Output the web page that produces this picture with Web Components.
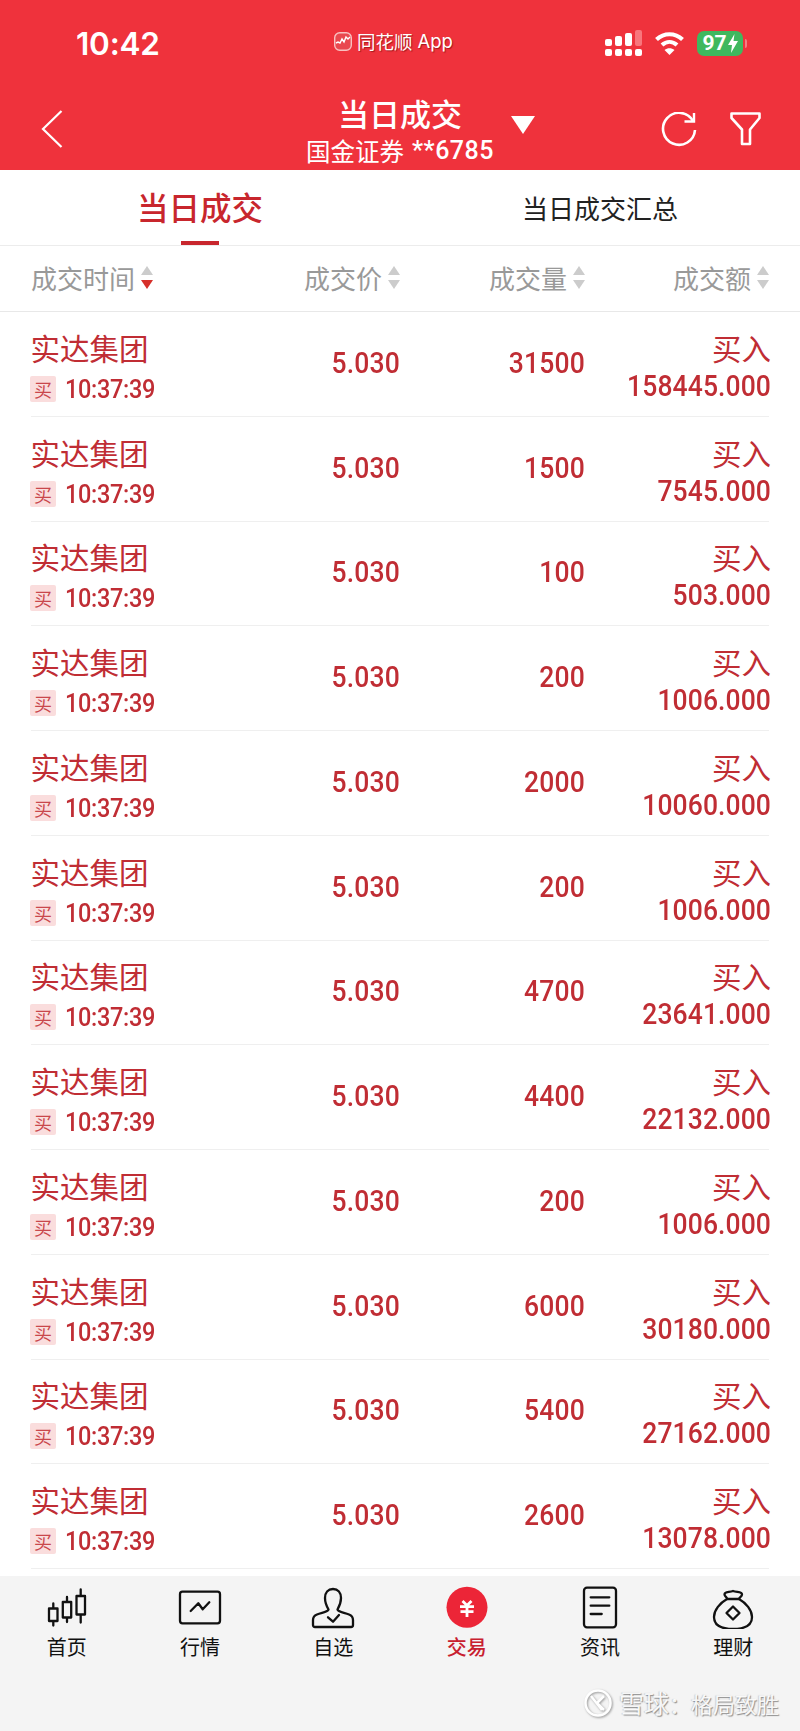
<!DOCTYPE html>
<html lang="zh"><head><meta charset="utf-8"><title>当日成交</title>
<style>
html,body{margin:0;padding:0;background:#fff;width:800px;height:1731px;overflow:hidden}
body{font-family:"Noto Sans CJK SC","Noto Sans",sans-serif}
</style></head><body>
<trade-app></trade-app>
<script>
const CJK='"Noto Sans CJK SC","Noto Sans",sans-serif';
const NUM='Roboto,"Noto Sans CJK SC",sans-serif';
function def(name,html){
  customElements.define(name,class extends HTMLElement{
    constructor(){super();const r=this.attachShadow({mode:'open'});r.innerHTML=typeof html==='function'?html(this):html;}
  });
}
def('status-bar',`<style>
:host{display:flex;align-items:center;height:80px;padding:0 0 0 76px;box-sizing:border-box;color:#fff;position:relative}
.time{font:600 31.5px/30px Inter,Roboto,sans-serif;letter-spacing:-.2px;width:258px;margin-top:8px}
.app{display:flex;align-items:center;gap:5px;font:400 18.5px/24px ${CJK};text-shadow:1px 1px 1px rgba(100,0,0,.55);margin-top:2px}
.app span{font:400 18.5px/24px Inter,Roboto,sans-serif}
.right{margin-left:auto;display:flex;align-items:center;margin-right:57px;margin-top:6px}
svg{display:block}
.bat{width:46px;height:25px;border-radius:7px;background:#3fb85e;display:flex;align-items:center;justify-content:center;font:700 21px/25px Roboto,sans-serif;margin-left:12px;position:relative;gap:1px}
.bat::after{content:"";position:absolute;right:-4px;top:8px;width:2px;height:9px;background:#f57d83;border-radius:0 2px 2px 0}
</style>
<div class="time">10:42</div>
<div class="app"><svg width="18" height="19" viewBox="0 0 18 19"><rect x=".7" y=".7" width="16.6" height="17.6" rx="5" fill="#e9484f" stroke="#f8c0c0" stroke-width="1.4"/><path d="M2 11l2-1 2 1 2-4 2 3 2-5 2 2 2-2" fill="none" stroke="#fff" stroke-width="1.4"/></svg>同花顺<span>App</span></div>
<div class="right">
<svg width="37" height="26" viewBox="0 0 37 26" fill="#fff"><rect x="0" y="9" width="7" height="7" rx="2"/><rect x="10" y="6" width="7" height="10" rx="2"/><rect x="20" y="3" width="7" height="13" rx="2"/><rect x="30" y="0" width="7" height="16" rx="2" fill="#f8767c"/><rect x="0" y="19" width="7" height="7" rx="2"/><rect x="10" y="19" width="7" height="7" rx="2"/><rect x="20" y="19" width="7" height="7" rx="2"/><rect x="30" y="19" width="7" height="7" rx="2"/></svg>
<svg style="margin-left:12px" width="31" height="24" viewBox="0 0 31 24" fill="none" stroke="#fff" stroke-width="4.2"><path d="M2.5 8.5C10 1.5 21 1.5 28.5 8.5"/><path d="M8 14c4.5-4 10.5-4 15 0"/><path d="M15.5 24l-5-5c3-2.5 7-2.5 10 0z" fill="#fff" stroke="none"/></svg>
<div class="bat">97<svg width="10" height="19" viewBox="0 0 10 19" fill="#fff"><path d="M6.5 0L0 11h4l-1 8 7-12H5.5z"/></svg></div>
</div>`);
def('nav-bar',`<style>
:host{display:grid;grid-template-columns:1fr auto 1fr;align-items:center;height:90px;color:#fff;box-sizing:border-box}
.back{padding-left:41px;margin-top:7px}
.t{text-align:center;margin-top:11px}
.a{font:500 31px/36px ${CJK}}
.b{font:400 24.5px/30px ${CJK};display:flex;align-items:center;margin-top:5px}
.b span{font:500 25px/30px Roboto,sans-serif;letter-spacing:.5px;margin-left:8px}
.r{display:flex;align-items:center;margin-top:10px}
.tri{width:0;height:0;border-left:12px solid transparent;border-right:12px solid transparent;border-top:18px solid #fff;margin-left:17px;margin-top:-11px}
.ic{margin-left:auto;display:flex;gap:33px;padding-right:39px}
svg{display:block}
</style>
<div class="back"><svg width="22" height="38" viewBox="0 0 22 38" fill="none" stroke="#fff" stroke-width="2.2"><path d="M20.5 1L2 19l18.5 18"/></svg></div>
<div class="t"><div class="a">当日成交</div><div class="b">国金证券<span>**6785</span></div></div>
<div class="r"><div class="tri"></div><div class="ic">
<svg width="36" height="36" viewBox="0 0 36 36" fill="none" stroke="#fff" stroke-width="2.6"><path d="M32 9A16 16 0 1 0 34 18"/><path d="M23.5 9.5H33V1" stroke-width="2.4"/></svg>
<svg width="31" height="34" viewBox="0 0 31 34" fill="none" stroke="#fff" stroke-width="2.6" stroke-linejoin="round"><path d="M1.5 1.5h28v4.5L20 17.5V32l-8 0V17.5L1.5 6z"/></svg>
</div></div>`);
def('tab-strip',`<style>
:host{display:flex;height:75px;border-bottom:1px solid #ececec;background:#fff}
.tab{flex:1;display:flex;align-items:center;justify-content:center;position:relative;font:400 26px/36px ${CJK};color:#222;box-sizing:border-box}
.on{color:#c8262d;font:500 31.5px/40px ${CJK};padding-bottom:3px}
.on::after{content:"";position:absolute;left:50%;margin-left:-19px;bottom:0;width:38px;height:4px;background:#c8262d}
</style><div class="tab on">当日成交</div><div class="tab">当日成交汇总</div>`);
def('sort-arrows',`<style>
:host{display:inline-flex;flex-direction:column;gap:5px;margin-left:6px}
i{display:block;width:0;height:0;border-left:6.5px solid transparent;border-right:6.5px solid transparent}
.u{border-bottom:9px solid #ccc}.d{border-top:9px solid #ccc}
:host([active]) .d{border-top-color:#d6302a}
</style><i class="u"></i><i class="d"></i>`);
def('table-head',`<style>
:host{display:grid;grid-template-columns:169px 200px 185px 184px;height:65px;padding:0 31px;border-bottom:1px solid #e8e8e8;align-items:center;font:400 26px/34px ${CJK};color:#999;background:#fff}
div{display:flex;align-items:center;justify-content:flex-end;padding-bottom:2px}
div:first-of-type{justify-content:flex-start;white-space:nowrap}
</style><div>成交时间<sort-arrows active></sort-arrows></div><div>成交价<sort-arrows></sort-arrows></div><div>成交量<sort-arrows></sort-arrows></div><div>成交额<sort-arrows></sort-arrows></div>`);
def('trade-row',h=>`<style>
:host{display:grid;grid-template-columns:169px 200px 185px 184px;flex:1 1 0;min-height:0;border-bottom:1px solid #efefef;align-items:center;color:#c02d34;box-sizing:border-box;margin:0 31px}
.n{font:400 29.5px/36px ${CJK};white-space:nowrap;margin-top:4px;margin-left:-.5px}
.l{display:flex;align-items:center;margin-top:10px}
.tag{width:26px;height:26px;background:#fadddd;border-radius:2px;font:400 18px/26px ${CJK};text-align:center;color:#c9474c;margin-left:-1px;flex:none}
.tm{display:inline-block;font:500 23.5px/28px ${NUM};margin-left:9px;letter-spacing:-.3px;white-space:nowrap;transform:scaleY(1.08)}
.v{font:500 26.5px/32px ${NUM};text-align:right;letter-spacing:.2px;transform:scaleY(1.08);padding-bottom:2px}
.c{text-align:right;margin-right:-2px}
.s{font:400 29.5px/36px ${CJK};margin-top:2px}
.m{font:500 26.5px/30px ${NUM};margin-top:6px;letter-spacing:.1px;transform:scaleY(1.1)}
</style>
<div><div class="n">实达集团</div><div class="l"><span class="tag">买</span><span class="tm">10:37:39</span></div></div>
<div class="v">5.030</div><div class="v">${h.getAttribute('vol')}</div>
<div class="c"><div class="s">买入</div><div class="m">${h.getAttribute('amt')}</div></div>`);
def('nav-item',h=>`<style>
:host{display:flex;flex-direction:column;align-items:center;flex:1;padding-top:9px;font:400 20px/26px ${CJK};color:#111}
:host([on]){color:#c8202f;font-weight:500}
</style><slot name="i"></slot><span>${h.getAttribute('label')}</span>`);
def('water-mark',`<style>
:host{position:absolute;right:21px;bottom:12px;display:flex;align-items:center;gap:7px;color:rgba(255,255,255,.92);font:400 22px/32px ${CJK};text-shadow:1px 1px 1px rgba(90,90,90,.65),-1px 0 1px rgba(150,150,150,.4)}
svg{display:block;filter:drop-shadow(1px 1px 1px rgba(90,90,90,.6))}
span{white-space:nowrap}
b{font:400 25px/32px ${CJK}}
</style><svg width="28" height="28" viewBox="0 0 28 28" fill="none" stroke="#fff" stroke-width="2.5"><circle cx="14" cy="14" r="12.5"/><path d="M7 7l11 14M20 7l-7 7 7 7"/></svg><span><b>雪球</b>：格局致胜</span>`);
const rows=[['31500','158445.000'],['1500','7545.000'],['100','503.000'],['200','1006.000'],['2000','10060.000'],['200','1006.000'],['4700','23641.000'],['4400','22132.000'],['200','1006.000'],['6000','30180.000'],['5400','27162.000'],['2600','13078.000']];
const SV='style="display:block;width:44px;height:44px;margin-bottom:5px" viewBox="0 0 44 44"';
def('trade-app',`<style>
:host{display:flex;flex-direction:column;width:800px;height:1731px;position:relative;overflow:hidden;background:#fff}
.hd{background:#ef323c;height:170px;display:flex;flex-direction:column;flex:none}
.list{height:1257px;display:flex;flex-direction:column;flex:none;background:#fff}
.gap{height:7px;flex:none}
.tb{flex:1;background:#f4f4f4;display:flex;align-items:flex-start}
svg{fill:none;stroke:#111;stroke-width:2.3;stroke-linejoin:round;stroke-linecap:round}
</style>
<div class="hd"><status-bar></status-bar><nav-bar></nav-bar></div>
<tab-strip></tab-strip>
<table-head></table-head>
<div class="list">${rows.map(r=>`<trade-row vol="${r[0]}" amt="${r[1]}"></trade-row>`).join('')}</div>
<div class="gap"></div>
<div class="tb">
<nav-item label="首页"><svg slot="i" ${SV}><path d="M4 23.5h8.5V36H4zM8.3 18.5v5M8.3 36v4.5M17.8 17h8.4v15.5h-8.4zM22 12v5M22 32.5V37M31.5 11h8.5v18.5h-8.5zM35.7 4.5V11M35.7 29.5v8"/></svg></nav-item>
<nav-item label="行情"><svg slot="i" ${SV}><rect x="2" y="6.7" width="40" height="31.6" rx="2.5"/><path d="M12.7 26l7.6-7.7 4.4 6 6.6-7"/></svg></nav-item>
<nav-item label="自选"><svg slot="i" ${SV}><path d="M17.5 24.5C15.5 21 14 17 14 13C14 7.5 17 4 22 4C27 4 30 7.5 30 13C30 17 28.5 21 26.5 24.5C27 27 33 27.5 38 29.5C41 30.7 42 32 42 35V40Q42 42 40 42H4Q2 42 2 40V35C2 32 3 30.7 6 29.5C11 27.5 17 27 17.5 24.5Z"/><path d="M17 32.3l5 4.4 6-6.7"/></svg></nav-item>
<nav-item label="交易" on><svg slot="i" ${SV}><circle cx="22" cy="22.3" r="20.5" fill="#ec2537" stroke="none"/><path d="M17.5 16l4.5 4.5 4.5-4.5M15 21.7h14M15.5 26.7h13M22 20.5V32" stroke="#fff" stroke-width="2.8" stroke-linecap="butt"/></svg></nav-item>
<nav-item label="资讯"><svg slot="i" ${SV}><rect x="6" y="2.7" width="32" height="39.6" rx="3"/><path d="M12.7 12.3h18.6M12.7 20.7h18.6M12.7 29h11"/></svg></nav-item>
<nav-item label="理财"><svg slot="i" ${SV}><path d="M16 14C16.5 12.5 13.5 11.5 13.5 9.5C13.5 6.5 18 7.5 22 6C26 7.5 31 6.5 31 9.5C31 11.5 28 12.5 28 14C35 18 41 25 41 32C41 40 34 44 22 44C10 44 3 40 3 32C3 25 9 18 16 14Z"/><path d="M16 14h12M22 21.5l6.5 6.5-6.5 6.5-6.5-6.5z"/></svg></nav-item>
</div>
<water-mark></water-mark>`);
</script>
</body></html>
